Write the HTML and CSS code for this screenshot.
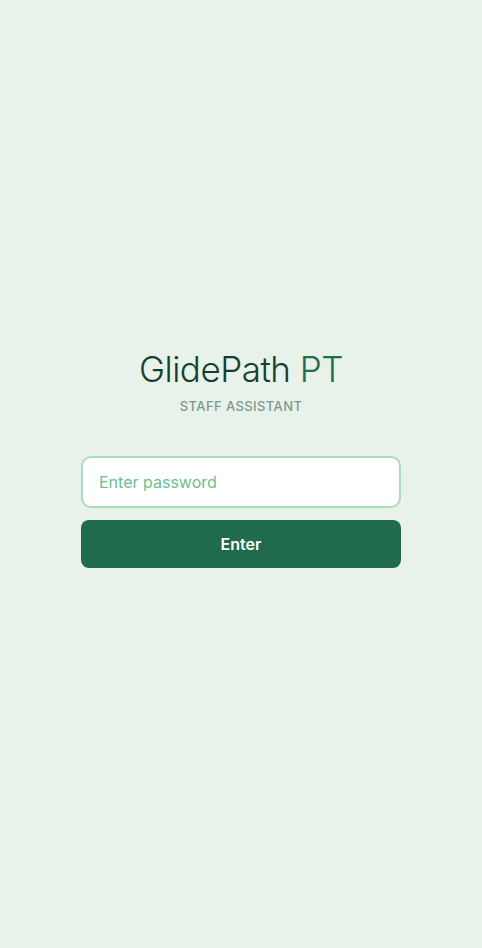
FILE: index.html
```html
<!DOCTYPE html>
<html lang="en">
<head>
<meta charset="utf-8">
<title>GlidePath PT</title>
<link rel="stylesheet" href="styles.css">
</head>
<body>
<main class="screen">
  <div class="login">
    <h1 class="brand"><span class="brand-main">GlidePath</span> <span class="brand-accent">PT</span></h1>
    <p class="subtitle">STAFF ASSISTANT</p>
    <form class="form">
      <input class="field" type="password" placeholder="Enter password">
      <button class="btn" type="button">Enter</button>
    </form>
  </div>
</main>
</body>
</html>
```

FILE: styles.css
```css
* { box-sizing: border-box; }
html, body { margin: 0; padding: 0; }
body {
  background: #e8f2ea;
  font-family: "Inter", "Noto Sans", sans-serif;
}
.screen {
  min-height: 948px;
  display: flex;
  flex-direction: column;
  align-items: center;
  justify-content: center;
  padding-bottom: 31px;
}
.login {
  width: 320px;
  display: flex;
  flex-direction: column;
  align-items: center;
}
.brand {
  margin: 0;
  font-size: 35px;
  font-weight: 300;
  line-height: 40px;
  letter-spacing: -0.5px;
}
.brand-main { color: #173f30; }
.brand-accent { color: #1f6b4b; }
.subtitle {
  margin: 9px 0 0;
  font-size: 13px;
  font-weight: 500;
  letter-spacing: 0.4px;
  color: #7d9a8e;
  line-height: 16px;
}
.form {
  margin-top: 42px;
  width: 100%;
  display: flex;
  flex-direction: column;
  gap: 12px;
}
.field {
  width: 100%;
  height: 52px;
  border: 2px solid #a9dbbe;
  border-radius: 10px;
  background: #ffffff;
  padding: 0 16px;
  font-family: inherit;
  font-size: 16px;
  color: #173f30;
  outline: none;
}
.field::placeholder { color: #6abf92; }
.btn {
  width: 100%;
  height: 48px;
  border: none;
  border-radius: 8px;
  background: #1f6b4b;
  color: #ffffff;
  font-family: inherit;
  font-size: 16px;
  font-weight: 600;
  cursor: pointer;
}
```
